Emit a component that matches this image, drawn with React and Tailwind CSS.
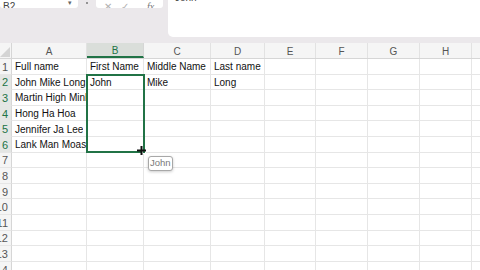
import React from "react";

const cols = [
  { l: "A", w: 75 },
  { l: "B", w: 57 },
  { l: "C", w: 67 },
  { l: "D", w: 54 },
  { l: "E", w: 51 },
  { l: "F", w: 52 },
  { l: "G", w: 52 },
  { l: "H", w: 52 },
  { l: "I", w: 52 },
];

const data = {
  1: ["Full name", "First Name", "Middle Name", "Last name"],
  2: ["John Mike Long", "John", "Mike", "Long"],
  3: ["Martin High Minh"],
  4: ["Hong Ha Hoa"],
  5: ["Jennifer Ja Lee"],
  6: ["Lank Man Moas"],
};

export default function App() {
  const rows = Array.from({ length: 14 }, (_, i) => i + 1);
  return (
    <div
      className="w-[480px] h-[270px] overflow-hidden bg-white relative"
      style={{ fontFamily: '"Liberation Sans", Arial, sans-serif' }}
    >
      {/* Top ribbon / formula bar */}
      <div className="h-[43px] bg-[#ebe8eb] flex items-start">
        <div className="w-[78px] h-[8px] bg-white rounded-b-[3px] flex items-end justify-between px-[3px] overflow-hidden">
          <span className="text-[10px] leading-none text-[#444] -mb-[4px]">B2</span>
          <span className="text-[7px] leading-none text-[#666] mb-[2px] mr-[3px]">▾</span>
        </div>
        <div className="w-[18px] flex justify-center">
          <div className="w-[2px] h-[2px] rounded-full bg-[#777] mt-[2px]" />
        </div>
        <div className="w-[67px] h-[8px] bg-white rounded-b-[3px] flex items-end px-[8px] gap-[9px] overflow-hidden text-[#b0b0b0]">
          <span className="text-[10px] leading-none -mb-[4px]">✕</span>
          <span className="text-[10px] leading-none -mb-[4px]">✓</span>
          <span className="text-[10px] leading-none -mb-[4px] italic ml-[9px] text-[#777]" style={{ fontFamily: '"Liberation Serif", serif' }}>fx</span>
        </div>
        <div className="ml-[5px] flex-1 h-[37px] bg-white rounded-bl-[5px] px-[7px] overflow-hidden">
          <div className="text-[10px] leading-none text-[#444] -mt-[7px]">John</div>
        </div>
      </div>

      {/* Column header */}
      <div className="flex h-[16px] bg-[#f5f5f5] border-b border-[#d6d6d6]">
        <div className="w-[12px] shrink-0 relative border-r border-[#d6d6d6]">
          <svg width="12" height="16" className="absolute inset-0">
            <polygon points="10,4 10,14 0,14" fill="#d4d4d4" />
          </svg>
        </div>
        {cols.map((c) => (
          <div
            key={c.l}
            style={{ width: c.w }}
            className={
              c.l === "B"
                ? "shrink-0 flex items-center justify-center pt-[1px] text-[10px] text-[#217346] bg-[#dadeda] border-b-2 border-[#217346] border-r border-r-[#d6d6d6]"
                : "shrink-0 flex items-center justify-center pt-[1px] text-[10px] text-[#555] border-r border-[#e2e2e2]"
            }
          >
            {c.l}
          </div>
        ))}
      </div>

      {/* Rows */}
      <div className="relative">
        {rows.map((r) => {
          const sel = r >= 2 && r <= 6;
          const vals = data[r] || [];
          return (
            <div key={r} className="flex h-[15.6px]">
              <div
                className={
                  sel
                    ? "w-[12px] shrink-0 flex justify-end items-center overflow-hidden pr-[3px] pt-[2px] text-[11px] text-[#217346] bg-[#e4e6e4] border-r border-[#d6d6d6] border-b border-b-[#e6e6e6]"
                    : "w-[12px] shrink-0 flex justify-end items-center overflow-hidden pr-[3px] pt-[2px] text-[11px] text-[#555] bg-[#f5f5f5] border-r border-[#d6d6d6] border-b border-b-[#e6e6e6]"
                }
              >
                <span className="shrink-0 leading-none">{r}</span>
              </div>
              {cols.map((c, ci) => (
                <div
                  key={c.l}
                  style={{ width: c.w }}
                  className="shrink-0 border-r border-b border-[#e6e6e6] flex items-center pl-[2px] pt-[2px] text-[10px] text-[#111] whitespace-nowrap overflow-visible relative"
                >
                  {vals[ci] ? (
                    <span
                      className={
                        ci === 0
                          ? "relative z-10 leading-none pl-[1px] overflow-hidden"
                          : "relative z-10 leading-none pl-[1px]"
                      }
                      style={ci === 0 ? { maxWidth: 72 } : undefined}
                    >
                      {vals[ci]}
                    </span>
                  ) : null}
                </div>
              ))}
            </div>
          );
        })}

        {/* Selection border B2:B6 */}
        <div className="absolute left-[86px] top-[14.5px] w-[59px] h-[79px] border-2 border-[#217346] pointer-events-none z-20" />
        {/* Fill handle */}
        <div className="absolute left-[142px] top-[91px] w-[4px] h-[4px] bg-[#217346] border border-white z-30" />
        {/* Crosshair cursor */}
        <svg className="absolute left-[137px] top-[87px] z-40" width="9" height="9" viewBox="0 0 9 9">
          <rect x="3.5" y="0" width="2" height="9" fill="#111" />
          <rect x="0" y="3.5" width="9" height="2" fill="#111" />
        </svg>
        {/* Tooltip */}
        <div className="absolute left-[148px] top-[97px] h-[15px] px-[1px] rounded-[3px] border border-[#a8a8a8] bg-white shadow-[0_1px_3px_rgba(0,0,0,0.2)] flex items-center text-[9.5px] text-[#7a7a7a] z-40">
          John
        </div>
      </div>
    </div>
  );
}
